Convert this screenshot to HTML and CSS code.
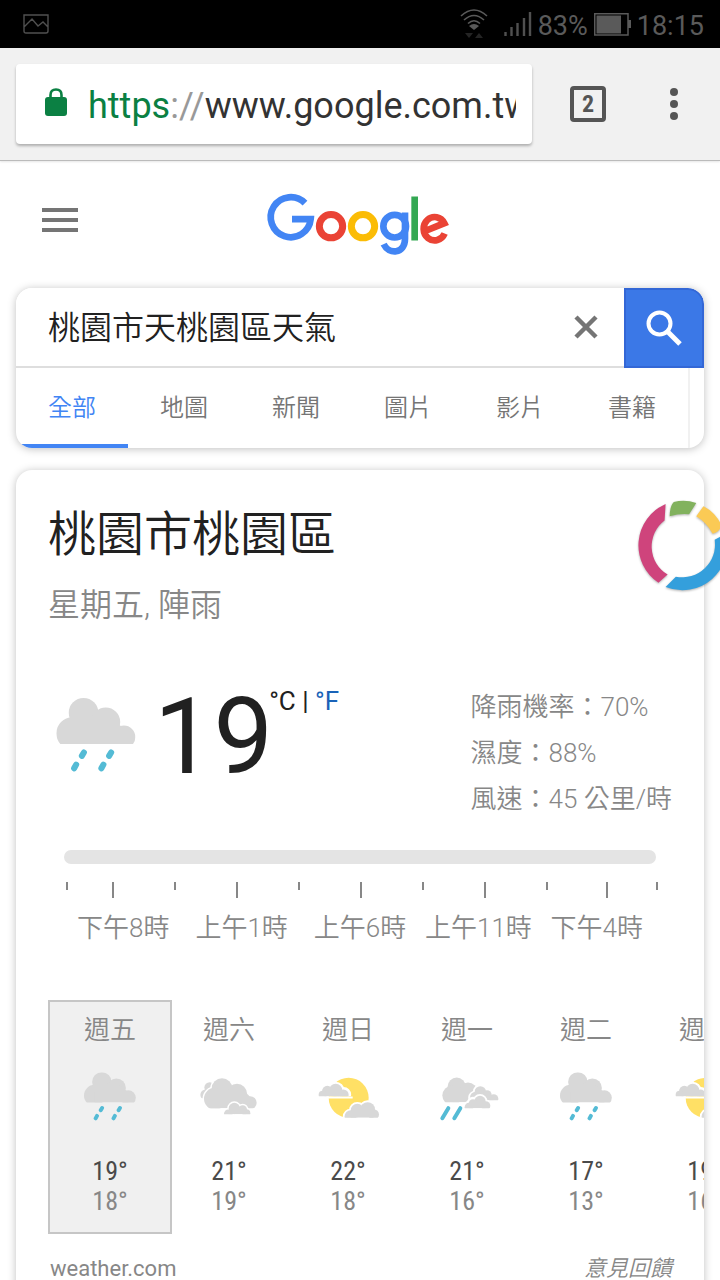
FILE: index.html
```html
<!DOCTYPE html>
<html lang="zh-Hant">
<head>
<meta charset="utf-8">
<meta name="viewport" content="width=device-width, initial-scale=1">
<title>桃園市天桃園區天氣 - Google</title>
<link rel="stylesheet" href="styles.css">
</head>
<body>
<svg class="defs" aria-hidden="true">
  <defs>
    <clipPath id="rain-clip"><path d="M0 0H236V137H0Z"/></clipPath>
    <clipPath id="back-clip"><path d="M500 276H700V354H500Z"/></clipPath>
    <clipPath id="main-clip"><path d="M500 276H700V384H500Z"/></clipPath>
    <clipPath id="small-clip"><path d="M570 340H700V402H570Z"/></clipPath>
    <clipPath id="left-clip"><path d="M856 276H970V348H856Z"/></clipPath>
    <clipPath id="right-clip"><path d="M930 340H1060V413H930Z"/></clipPath>
    <clipPath id="m1-clip"><path d="M194 276H390V366H194Z"/></clipPath>
    <clipPath id="m2-clip"><path d="M194 276H390V360H194Z"/></clipPath>
    <clipPath id="m3-clip"><path d="M194 276H390V384H194Z"/></clipPath>
    <g id="rain">
      <g fill="#d8d8d8" clip-path="url(#rain-clip)">
        <circle cx="81" cy="44" r="44"/><circle cx="147" cy="71" r="43"/><circle cx="48" cy="105" r="48"/><circle cx="201" cy="116" r="34"/><path d="M48 60H160L201 90V137H48Z"/>
      </g>
      <g stroke="#54bbd5" stroke-width="18" stroke-linecap="round">
        <path d="M82 162L76 172M59 198L53 209M163 162L157 172M140 198L134 209"/>
      </g>
    </g>
    <symbol id="i-rain" viewBox="0 0 236 220"><use href="#rain"/></symbol>
    <symbol id="i-rain-day" viewBox="-27 0 290 220"><use href="#rain"/></symbol>
    <symbol id="i-cloudy" viewBox="500 276 192 146">
      <g fill="#d8d8d8" clip-path="url(#back-clip)"><circle cx="538" cy="322" r="16"/><circle cx="526" cy="344" r="16"/></g>
      <g clip-path="url(#main-clip)">
        <g fill="#d8d8d8" stroke="#fff" stroke-width="9"><circle cx="575" cy="325" r="31"/><circle cx="554" cy="356" r="33"/></g>
        <g fill="#d8d8d8"><circle cx="575" cy="325" r="31"/><circle cx="620" cy="341" r="30"/><circle cx="554" cy="356" r="33"/><circle cx="659" cy="368" r="20"/><path d="M554 330H640L659 350V384H554Z"/></g>
      </g>
      <g clip-path="url(#small-clip)">
        <g fill="#fff" stroke="#fff" stroke-width="9"><circle cx="612" cy="385" r="17"/><circle cx="637" cy="388" r="13"/><circle cx="594" cy="401" r="13"/><circle cx="648" cy="399" r="12"/></g>
        <g fill="#d8d8d8"><circle cx="612" cy="385" r="17"/><circle cx="637" cy="388" r="13"/><circle cx="594" cy="401" r="13"/><circle cx="648" cy="399" r="12"/><path d="M594 390H648V402H594Z"/></g>
      </g>
    </symbol>
    <symbol id="i-sunny" viewBox="856 276 192 146">
      <circle cx="954" cy="353" r="60" fill="#ffe065"/>
      <path d="M856 349H966V355H856Z" fill="#fff"/>
      <g clip-path="url(#left-clip)">
        <g fill="#fff" stroke="#fff" stroke-width="11"><circle cx="915" cy="331" r="21"/><circle cx="890" cy="333" r="15"/><circle cx="939" cy="343" r="17"/></g>
        <g fill="#d8d8d8"><circle cx="915" cy="331" r="20"/><circle cx="890" cy="333" r="16"/><circle cx="876" cy="344" r="12"/><circle cx="938" cy="344" r="16"/><path d="M880 335H938V348H880Z"/></g>
      </g>
      <g clip-path="url(#right-clip)">
        <g fill="#fff" stroke="#fff" stroke-width="11"><circle cx="1011" cy="388" r="22"/><circle cx="980" cy="391" r="20"/><circle cx="960" cy="409" r="18"/></g>
        <g fill="#d8d8d8"><circle cx="1011" cy="388" r="22"/><circle cx="980" cy="391" r="20"/><circle cx="960" cy="408" r="18"/><circle cx="1029" cy="403" r="16"/><path d="M960 395H1029V413H960Z"/></g>
      </g>
    </symbol>
    <symbol id="i-mixed" viewBox="194 276 192 146">
      <g fill="#d8d8d8" clip-path="url(#m1-clip)"><circle cx="259" cy="319" r="27"/><circle cx="246" cy="346" r="30"/><circle cx="293" cy="335" r="28"/><path d="M246 330H300V366H246Z"/></g>
      <g clip-path="url(#m2-clip)">
        <g fill="#fff" stroke="#fff" stroke-width="11"><circle cx="330" cy="335" r="17"/><circle cx="314" cy="352" r="15"/><circle cx="349" cy="344" r="14"/></g>
        <g fill="#d8d8d8"><circle cx="330" cy="335" r="17"/><circle cx="316" cy="352" r="17"/><circle cx="350" cy="344" r="14"/><circle cx="370" cy="356" r="14"/><path d="M318 345H370V360H318Z"/></g>
      </g>
      <g clip-path="url(#m3-clip)">
        <g fill="#fff" stroke="#fff" stroke-width="11"><circle cx="329" cy="364" r="17"/><circle cx="308" cy="368" r="13"/><circle cx="296" cy="380" r="13"/><circle cx="346" cy="377" r="13"/></g>
        <g fill="#d8d8d8"><circle cx="329" cy="364" r="17"/><circle cx="308" cy="370" r="13"/><circle cx="296" cy="381" r="13"/><circle cx="346" cy="377" r="14"/><path d="M296 372H346V384H296Z"/></g>
      </g>
      <path d="M234 384L216 414M270 384L252 414" stroke="#54bbd5" stroke-width="12" stroke-linecap="round"/>
    </symbol>
  </defs>
</svg>

<div class="screen">
  <header class="status">
    <svg class="status-picture" viewBox="0 0 26 20" aria-hidden="true"><path d="M1 1H25V17Q25 19 23 19H3Q1 19 1 17ZM1 13L9 5L15 12L20 8L25 13" fill="none" stroke="#505050" stroke-width="1.4"/></svg>
    <div class="status-right">
      <svg class="wifi" viewBox="0 0 28 30" aria-hidden="true">
        <path d="M1 7Q14 -5 27 7M4 11Q14 2 24 11M8 14.500Q14 9 20 14.500" fill="none" stroke="#5a5a5a" stroke-width="1.600"/>
        <path d="M9 17Q14 13 19 17L14 21Z" fill="#5a5a5a"/><path d="M5 24H13L9 29ZM19 24L23 29H15Z" fill="#242424"/>
      </svg>
      <svg class="signal" viewBox="0 0 28 24" aria-hidden="true"><path d="M1.500 20V24M7.500 15V24M13.500 11V24M20 6V24M26 0V24" stroke="#505050" stroke-width="2.400"/></svg>
      <span>83%</span>
      <svg class="battery" viewBox="0 0 37 23" aria-hidden="true"><path d="M.75 .75H34V22H.75Z" fill="none" stroke="#5a5a5a" stroke-width="1.500"/><path d="M2.500 2.500H27V20.500H2.500ZM34 7H37V15H34Z" fill="#5a5a5a"/></svg>
      <span>18:15</span>
    </div>
  </header>

  <nav class="toolbar" aria-label="瀏覽器">
    <div class="address">
      <svg class="lock" viewBox="0 0 22 28" aria-hidden="true"><rect y="9" width="22" height="19" rx="3" fill="#0b8043"/><path d="M5.500 11V7Q5.500 1.500 11 1.500T16.500 7V11" fill="none" stroke="#0b8043" stroke-width="2.600"/></svg>
      <div class="url"><span class="scheme">https</span><span class="slashes">://</span>www.google.com.tw</div>
    </div>
    <button class="tabs-count" type="button">2</button>
    <button class="more" type="button" aria-label="更多"><svg viewBox="0 0 8 32"><g fill="#555"><circle cx="4" cy="4" r="4"/><circle cx="4" cy="16" r="4"/><circle cx="4" cy="28" r="4"/></g></svg></button>
  </nav>

  <main class="page">
    <div class="masthead">
      <button class="menu" type="button" aria-label="選單"><svg viewBox="0 0 36 24"><path d="M0 2H36M0 12H36M0 22H36" stroke="#757575" stroke-width="4"/></svg></button>
      <svg class="logo" viewBox="54 42 540 182" role="img" aria-label="Google">
        <g fill="none" stroke-width="20">
          <path d="M165 69A60 60 0 1 0 182 117H126" stroke="#4285f4"/>
          <circle cx="243" cy="138" r="35" stroke="#ea4335" stroke-width="21"/>
          <circle cx="339" cy="138" r="35" stroke="#fbbc05" stroke-width="21"/>
          <circle cx="434" cy="138" r="34" stroke="#4285f4"/>
          <path d="M465 97V176C465 222 416 224 401 192" stroke="#4285f4"/>
          <path d="M494 49V181" stroke="#34a853"/>
          <path d="M522 154L583 129A33 35 0 1 0 584 160" stroke="#ea4335"/>
        </g>
      </svg>
    </div>

    <section class="card search">
      <form class="search-row">
        <input class="query" type="text" aria-label="搜尋" value="桃園市天桃園區天氣">
        <button class="clear" type="reset" aria-label="清除"><svg viewBox="0 0 24 24"><path d="M2 2L22 22M22 2L2 22" stroke="#757575" stroke-width="4.500"/></svg></button>
        <button class="go" type="button" aria-label="Google 搜尋"><svg viewBox="0 0 36 36"><circle cx="13.500" cy="13.500" r="11" fill="none" stroke="#fff" stroke-width="4"/><path d="M21 21L34 34" stroke="#fff" stroke-width="5"/></svg></button>
      </form>
      <nav class="tabs">
        <a class="tab active" href="#all">全部</a>
        <a class="tab" href="#maps">地圖</a>
        <a class="tab" href="#news">新聞</a>
        <a class="tab" href="#images">圖片</a>
        <a class="tab" href="#videos">影片</a>
        <a class="tab" href="#books">書籍</a>
        <span class="tabs-edge"></span>
      </nav>
    </section>

    <section class="card weather">
      <h1 class="place">桃園市桃園區</h1>
      <p class="condition">星期五, 陣雨</p>
      <div class="now">
        <svg class="now-icon" role="img" aria-label="陣雨"><use href="#i-rain"/></svg>
        <span class="degrees">19</span>
        <span class="units">°C | <a href="#f">°F</a></span>
        <div class="details">
          <div>降雨機率：70%</div>
          <div>濕度：88%</div>
          <div>風速：45 公里/時</div>
        </div>
      </div>

      <div class="timeline">
        <input class="slider" type="range" aria-label="時間">
        <div class="ticks"><i></i><i></i><i></i><i></i><i></i><i></i><i></i><i></i><i></i><i></i><i></i></div>
        <div class="hours"><span>下午8時</span><span>上午1時</span><span>上午6時</span><span>上午11時</span><span>下午4時</span></div>
      </div>

      <div class="days">
        <button class="day selected" type="button"><span class="name">週五</span><svg><use href="#i-rain-day"/></svg><span class="high">19°</span><span class="low">18°</span></button>
        <button class="day" type="button"><span class="name">週六</span><svg><use href="#i-cloudy"/></svg><span class="high">21°</span><span class="low">19°</span></button>
        <button class="day" type="button"><span class="name">週日</span><svg><use href="#i-sunny"/></svg><span class="high">22°</span><span class="low">18°</span></button>
        <button class="day" type="button"><span class="name">週一</span><svg><use href="#i-mixed"/></svg><span class="high">21°</span><span class="low">16°</span></button>
        <button class="day" type="button"><span class="name">週二</span><svg><use href="#i-rain-day"/></svg><span class="high">17°</span><span class="low">13°</span></button>
        <button class="day" type="button"><span class="name">週三</span><svg><use href="#i-sunny"/></svg><span class="high">19°</span><span class="low">16°</span></button>
      </div>

      <footer class="credits"><a href="#source">weather.com</a><a class="feedback" href="#feedback">意見回饋</a></footer>
    </section>
  </main>

  <svg class="bubble" viewBox="0 0 90 90" aria-hidden="true">
    <path d="M27 4A44 44 0 0 0 20 81L29 73A32 32 0 0 1 26 20Z" fill="#cf447c"/>
    <path d="M35 2Q46 -1 57 3L50 14Q41 13 31 16Q31 6 35 2Z" fill="#82b25e"/>
    <path d="M64 6Q76 12 82 25Q80 31 73 33Q67 22 57 16Z" fill="#fbca55"/>
    <path d="M86 33A44 44 0 0 1 27 85L37 75A32 32 0 0 0 75 39Z" fill="#349fdc"/>
  </svg>
</div>
</body>
</html>
```
FILE: styles.css
```css
* { box-sizing: border-box; }
body {
  margin: 0;
  background: #fff;
  color: #212121;
  font-family: Roboto, "Noto Sans CJK TC", sans-serif;
}
button { margin: 0; padding: 0; border: 0; background: none; color: inherit; font: inherit; }
a { color: inherit; text-decoration: none; }
svg { display: block; flex: none; }
.defs { position: absolute; width: 0; height: 0; }

.screen {
  position: relative;
  height: 100vh;
  overflow: hidden;
}

.status {
  display: flex;
  align-items: center;
  justify-content: space-between;
  height: 48px;
  padding: 0 16px 0 23px;
  background: #000;
  color: #5a5a5a;
  font-size: 27px;
  line-height: 44px;
}
.status span { padding-top: 4px; }
.status-picture { width: 26px; height: 20px; }
.status-right { display: flex; align-items: center; gap: 6px; }
.wifi { width: 28px; height: 30px; margin-right: 10px; }
.signal { width: 28px; height: 24px; }
.battery { width: 37px; height: 23px; }

.toolbar {
  display: flex;
  align-items: center;
  height: 113px;
  padding: 0 42px 0 16px;
  background: #f1f1f1;
  border-bottom: 1px solid #bbb;
  box-shadow: 0 1px 2px rgba(0, 0, 0, .1);
}
.address {
  display: flex;
  flex: 1;
  align-items: center;
  gap: 21px;
  min-width: 0;
  height: 80px;
  padding: 0 16px 0 29px;
  background: #fff;
  border-radius: 4px;
  box-shadow: 0 2px 3px rgba(0, 0, 0, .28);
}
.lock { width: 22px; height: 28px; margin-bottom: 4px; }
.url {
  flex: 1;
  min-width: 0;
  padding-top: 3px;
  overflow: hidden;
  color: #333;
  font-size: 36px;
  line-height: 48px;
  white-space: nowrap;
}
.scheme { color: #0b8043; }
.slashes { color: #999; }
.tabs-count {
  width: 36px;
  height: 36px;
  margin: 0 64px 0 38px;
  border: 4px solid #555;
  border-radius: 4px;
  color: #555;
  font-family: "Roboto Condensed", Roboto, sans-serif;
  font-size: 24px;
  font-weight: 700;
  line-height: 28px;
}
.more svg { width: 8px; height: 32px; }

.page { padding: 0 16px; }
.masthead {
  display: grid;
  grid-template-columns: 1fr auto 1fr;
  align-items: center;
  height: 127px;
  padding-left: 26px;
}
.menu { justify-self: start; margin-bottom: 10px; }
.menu svg { width: 36px; height: 24px; }
.logo { width: 180px; height: 61px; margin-right: 30px; overflow: visible; }

.card {
  background: #fff;
  border-radius: 16px;
  box-shadow: 0 1px 8px rgba(0, 0, 0, .25);
  overflow: hidden;
}
.search { margin-bottom: 22px; }
.search-row { display: flex; height: 80px; }
.query {
  flex: 1;
  min-width: 0;
  padding: 0 0 4px 32px;
  border: 0;
  border-bottom: 2px solid #dedede;
  background: #fff;
  color: #212121;
  font: 350 32px Roboto, "Noto Sans CJK TC", sans-serif;
}
.clear { padding: 0 26px; border-bottom: 2px solid #dedede; }
.clear svg { width: 24px; height: 24px; }
.go {
  display: flex;
  align-items: center;
  justify-content: center;
  width: 80px;
  background: #3b78e7;
  border: 2px solid #3367d6;
  border-top-right-radius: 16px;
}
.go svg { width: 36px; height: 36px; }
.tabs { display: flex; height: 80px; }
.tab {
  flex: none;
  width: 112px;
  border-bottom: 4px solid transparent;
  color: #757575;
  font-size: 24px;
  font-weight: 350;
  line-height: 80px;
  text-align: center;
}
.active { border-color: #4285f4; color: #4285f4; }
.tabs-edge { flex: 1; margin-right: 14px; border-right: 2px solid #f1f1f1; }

.weather { padding: 30px 0 64px; }
.place {
  margin: 0 32px;
  font-size: 48px;
  font-weight: 350;
  line-height: 70px;
}
.condition {
  margin: 12px 32px 0;
  color: #878787;
  font-size: 32px;
  font-weight: 350;
  line-height: 46px;
}
.now {
  display: flex;
  align-items: flex-start;
  padding: 56px 32px 0 40px;
}
.now-icon { width: 80px; height: 74px; margin: 14px 18px 0 0; }
.degrees { font-size: 106px; line-height: 106px; }
.units { margin-left: -4px; padding-top: 1px; font-size: 26px; line-height: 32px; white-space: pre; }
.units a { color: #1a63b8; }
.details {
  margin-left: auto;
  color: #878787;
  font-size: 26px;
  font-weight: 350;
  line-height: 46px;
}

.timeline { margin: 28px 48px 0; color: #878787; }
.slider {
  appearance: none;
  display: block;
  width: 100%;
  height: 14px;
  margin: 0 0 18px;
  border-radius: 7px;
  background: #e4e4e4;
}
.slider::-webkit-slider-thumb { appearance: none; width: 0; height: 0; }
.ticks {
  display: grid;
  grid-template-columns: 46fr 62fr 62fr 62fr 62fr 62fr 62fr 62fr 60fr 50fr 2px;
  height: 16px;
  margin: 0 -2px 0 2px;
}
.ticks i { height: 8px; border-left: 2px solid #878787; }
.ticks i:nth-child(even) { height: 16px; }
.hours {
  display: grid;
  grid-template-columns: repeat(5, 1fr);
  margin-top: 10px;
  font-size: 26px;
  font-weight: 350;
  line-height: 40px;
  text-align: center;
  white-space: nowrap;
}

.days {
  display: flex;
  margin: 52px 0 0 32px;
  overflow: hidden;
}
.day {
  display: flex;
  flex: none;
  flex-direction: column;
  align-items: center;
  width: 124px;
  height: 234px;
  margin-right: -5px;
  padding-top: 8px;
  border: 2px solid transparent;
  color: #878787;
  font-family: "Roboto Condensed", Roboto, "Noto Sans CJK TC", sans-serif;
  font-size: 26px;
  line-height: 30px;
}
.selected { background: #f0f0f0; border-color: #c6c6c6; }
.name { font-weight: 350; line-height: 40px; }
.day svg { width: 64px; height: 49px; margin: 22px 0 35px; }
.high { color: #4a4a4a; }

.credits {
  display: flex;
  justify-content: space-between;
  margin: 17px 32px 0 34px;
  color: #878787;
  font-size: 22px;
  line-height: 36px;
}
.feedback { font-style: italic; font-weight: 350; }

.bubble {
  position: absolute;
  top: 500px;
  right: -10px;
  width: 92px;
  height: 92px;
  filter: drop-shadow(0 1px 1px rgba(0, 0, 0, .3));
}
```
